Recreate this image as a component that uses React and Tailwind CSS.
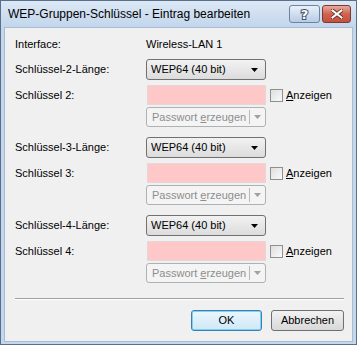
import React from "react";

const font = { fontFamily: '"Liberation Sans", Arial, sans-serif' };

function Combo() {
  return (
    <div className="w-[120px] h-[21px] rounded-[3px] border border-[#707070] bg-gradient-to-b from-[#f2f2f2] to-[#dcdcdc] flex items-center pl-[4px] pr-[7px] text-[11px] text-black">
      <span className="flex-1">WEP64 (40 bit)</span>
      <svg width="7" height="4" viewBox="0 0 7 4">
        <path d="M0 0h7L3.5 4z" fill="#000" />
      </svg>
    </div>
  );
}

function KeyGroup({ n }) {
  return (
    <div className="flex flex-col">
      <div className="flex items-center h-[21px]">
        <div className="w-[131px] text-[11px]">Schlüssel-{n}-Länge:</div>
        <Combo />
      </div>
      <div className="flex items-center h-[20px] mt-[5px]">
        <div className="w-[131px] text-[11px]">Schlüssel {n}:</div>
        <div className="w-[119px] h-[20px] ml-[1px] bg-[#ffc8c8] border border-[#e6d6d6]" />
        <div className="ml-[4px] w-[13px] h-[13px] border border-[#8e8f8f] bg-gradient-to-br from-[#dedede] to-[#fafafa]" />
        <span className="ml-[3px] text-[11px]">
          <u>A</u>nzeigen
        </span>
      </div>
      <div className="flex items-center h-[20px] mt-[2px]">
        <div className="w-[131px]" />
        <div className="w-[120px] h-[20px] rounded-[3px] border border-[#adb2b5] bg-[#f4f4f4] flex items-center text-[11px] text-[#8d8d8d]">
          <span className="flex-1 pl-[5px]">
            Passwort <u>e</u>rzeugen
          </span>
          <div className="w-px h-[14px] bg-[#b8b8b8]" />
          <div className="w-[15px] flex justify-center">
            <svg width="7" height="4" viewBox="0 0 7 4">
              <path d="M0 0h7L3.5 4z" fill="#a0a0a0" />
            </svg>
          </div>
        </div>
      </div>
    </div>
  );
}

export default function App() {
  return (
    <div
      className="w-[357px] h-[345px] flex flex-col border border-[#5a6f8c] bg-[#c4d7ed] text-black"
      style={font}
    >
      {/* Title bar */}
      <div className="h-[26px] flex items-center bg-gradient-to-b from-[#dce8f5] to-[#c2d6ec] pl-[7px] pr-[5px]">
        <span className="flex-1 text-[12px] text-black">
          WEP-Gruppen-Schlüssel - Eintrag bearbeiten
        </span>
        <div className="w-[31px] h-[18px] rounded-[3px] border border-[#6d83a2] bg-gradient-to-b from-[#e9f0f8] to-[#b7cce6] flex items-center justify-center mr-[2px]">
          <span
            className="text-[13px] font-bold text-white [-webkit-text-stroke:2px_#3e4f68] [paint-order:stroke_fill] leading-none"
            style={{ fontFamily: '"DejaVu Sans", sans-serif' }}
          >
            ?
          </span>
        </div>
        <div className="w-[29px] h-[18px] rounded-[3px] border border-[#7a3a33] bg-gradient-to-b from-[#e9a99c] via-[#d0624f] to-[#c4513c] flex items-center justify-center">
          <svg width="12" height="10" viewBox="0 0 12 10">
            <path d="M1.5 1.5l9 7M10.5 1.5l-9 7" stroke="#5a2a24" strokeWidth="3.6" strokeLinecap="square" />
            <path d="M1.5 1.5l9 7M10.5 1.5l-9 7" stroke="#fff" strokeWidth="2" strokeLinecap="square" />
          </svg>
        </div>
      </div>

      {/* Client */}
      <div className="flex-1 flex flex-col mx-[3px] mb-[2px] bg-[#f0f0f0] border border-[#a8bcd6] pl-[10px] pr-[8px] pt-[10px]">
        <div className="flex items-center h-[13px] text-[11px]">
          <div className="w-[131px]">Interface:</div>
          <div>Wireless-LAN 1</div>
        </div>

        <div className="mt-[8px] flex flex-col gap-[10px]">
          <KeyGroup n={2} />
          <KeyGroup n={3} />
          <KeyGroup n={4} />
        </div>

        <div className="mt-[15px] h-px bg-[#a0a0a0] border-b border-white box-content" />

        <div className="mt-[10px] flex justify-end gap-[9px]">
          <div className="w-[71px] h-[21px] rounded-[3px] border border-[#3c7fb1] bg-gradient-to-b from-[#eaf6fd] to-[#d0e8f6] flex items-center justify-center text-[11px] shadow-[inset_0_0_0_1px_#7dd1f5]">
            OK
          </div>
          <div className="w-[73px] h-[21px] rounded-[3px] border border-[#707070] bg-gradient-to-b from-[#f2f2f2] to-[#d8d8d8] flex items-center justify-center text-[11px]">
            Abbrechen
          </div>
        </div>
      </div>
    </div>
  );
}
